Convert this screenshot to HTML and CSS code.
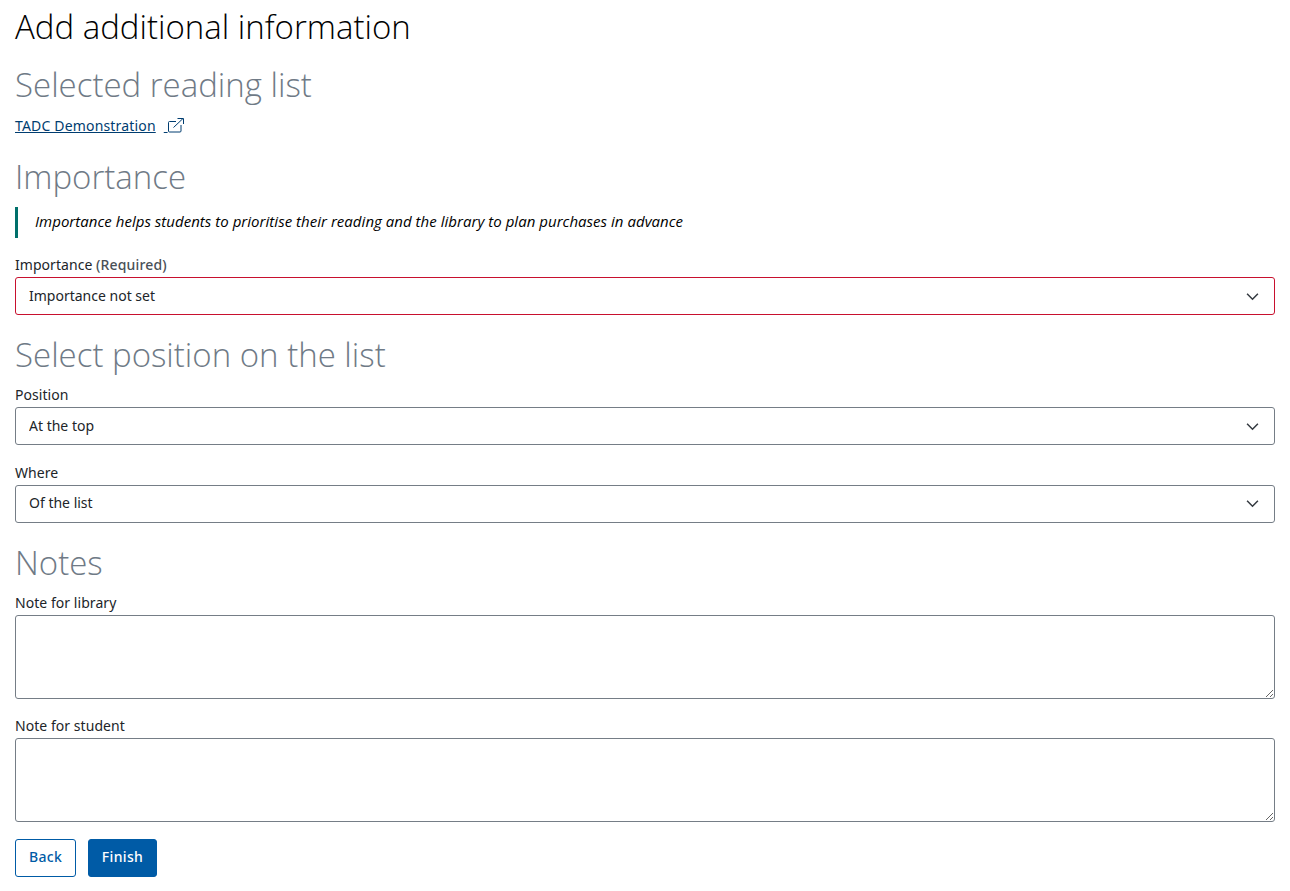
FILE: index.html
```html
<!DOCTYPE html>
<html lang="en">
<head>
  <meta charset="UTF-8" />
  <title>Add additional information</title>
  <link rel="stylesheet" href="styles.css">
</head>
<body>
  <h1>Add additional information</h1>

  <h2>Selected reading list</h2>
  <p class="list-link">
    <a href="#">TADC Demonstration<span class="link-gap">&nbsp;</span><svg class="external" viewBox="0 0 16 16" width="16" height="16" fill="none" stroke="currentColor" stroke-width="1"><path d="M8 3.5H1.5a1 1 0 0 0-1 1V13a1 1 0 0 0 1 1H12a1 1 0 0 0 1-1V7"/><path d="M5.5 9.5 15 .5M9.5 .5H15.5V6"/></svg></a>
  </p>

  <h2>Importance</h2>
  <blockquote class="hint">Importance helps students to prioritise their reading and the library to plan purchases in advance</blockquote>

  <div class="field">
    <label for="importance">Importance <span class="required">(Required)</span></label>
    <select id="importance" class="invalid"><option>Importance not set</option></select>
  </div>

  <h2>Select position on the list</h2>
  <div class="field">
    <label for="position">Position</label>
    <select id="position"><option>At the top</option></select>
  </div>
  <div class="field">
    <label for="where">Where</label>
    <select id="where"><option>Of the list</option></select>
  </div>

  <h2>Notes</h2>
  <div class="field">
    <label for="library-note">Note for library</label>
    <textarea id="library-note"></textarea>
  </div>
  <div class="field">
    <label for="student-note">Note for student</label>
    <textarea id="student-note"></textarea>
  </div>

  <div class="actions">
    <button class="btn btn-outline">Back</button>
    <button class="btn btn-primary">Finish</button>
  </div>
</body>
</html>
```

FILE: styles.css
```css
* {
  box-sizing: border-box;
}
body {
  margin: 0;
  padding: 0 15px;
  background: #fff;
  color: #212529;
  font-family: "Noto Sans", "Open Sans", sans-serif;
  font-size: 14px;
  letter-spacing: 0.05px;
}
h1 {
  margin: 0;
  padding-top: 6px;
  font-family: "Open Sans", sans-serif;
  font-size: 33px;
  font-weight: 300;
  line-height: 42px;
  letter-spacing: 0;
  color: #000;
}
h2 {
  margin: 20px 0 10px;
  font-family: "Open Sans", sans-serif;
  font-size: 33px;
  font-weight: 300;
  line-height: 40px;
  letter-spacing: 0;
  color: #6f7a86;
}
h1 + h2 {
  margin-top: 17px;
  margin-bottom: 0;
}
.list-link {
  margin: 10px 0 20px;
  line-height: 22px;
}
.list-link a {
  color: #003d70;
  letter-spacing: 0.17px;
}
.link-gap {
  margin-left: 8px;
}
.external {
  vertical-align: -3px;
}
.hint {
  margin: 0 0 17px;
  padding: 0 0 2px 17px;
  border-left: 3px solid #00706b;
  font-family: "Open Sans", sans-serif;
  font-size: 15px;
  font-style: italic;
  line-height: 29px;
  letter-spacing: 0.03px;
  color: #000;
}
.field {
  margin-bottom: 17.5px;
}
.field label {
  display: block;
  line-height: 20px;
  margin-bottom: 2px;
  color: #212529;
}
.required {
  font-weight: 500;
  letter-spacing: 0.15px;
  color: #495057;
}
select, textarea {
  display: block;
  width: 100%;
  border: 1px solid #757d86;
  border-radius: 3px;
  background-color: #fff;
  color: #212529;
  font: inherit;
}
select {
  height: 38px;
  padding: 0 40px 2px 13px;
  appearance: none;
  background-image: url("data:image/svg+xml,%3Csvg xmlns='http://www.w3.org/2000/svg' viewBox='0 0 12 8'%3E%3Cpath d='M1 1.5 6 6.5 11 1.5' fill='none' stroke='%23343a40' stroke-width='1.4'/%3E%3C/svg%3E");
  background-repeat: no-repeat;
  background-position: right 15px center;
  background-size: 13px 9px;
}
select.invalid {
  border-color: #c8102e;
}
textarea {
  height: 84px;
  padding: 6px 13px;
  resize: vertical;
}
.actions {
  display: flex;
  gap: 12px;
  margin-top: -0.5px;
}
.btn {
  height: 38px;
  padding: 0 12.5px 3px;
  border: 1px solid #005ba6;
  border-radius: 3px;
  font: inherit;
  font-weight: 500;
  letter-spacing: 0.35px;
}
.btn-outline {
  padding: 0 13px 3px;
  background: #fff;
  color: #005ba6;
}
.btn-primary {
  background: #005ba6;
  color: #fff;
}
```
